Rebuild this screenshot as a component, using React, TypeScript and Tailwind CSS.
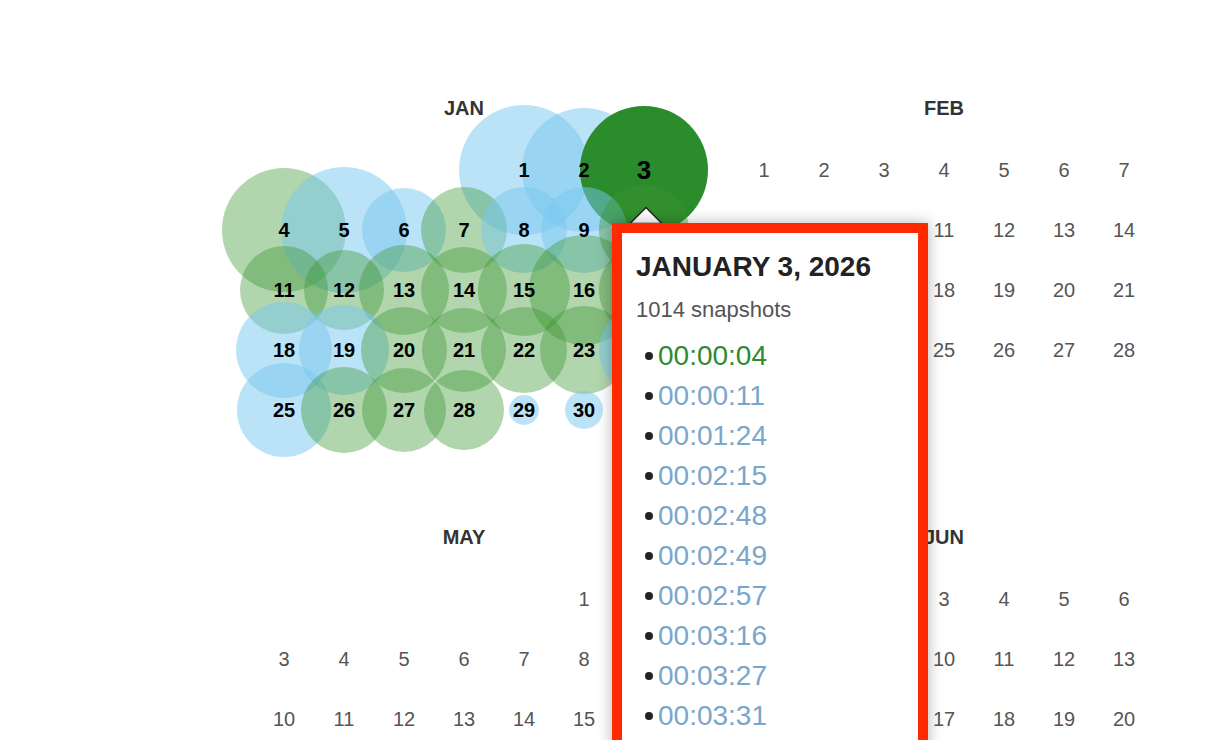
import React from "react";

type Kind = "blue" | "green" | "sel";

// January snapshot bubbles: radius in px, colour kind
const janDays: Record<number, [number, Kind]> = {
  1: [65, "blue"],
  2: [62, "blue"],
  3: [64, "sel"],
  4: [62, "green"],
  5: [63, "blue"],
  6: [42, "blue"],
  7: [43, "green"],
  8: [43, "blue"],
  9: [43, "blue"],
  10: [45, "green"],
  11: [44, "green"],
  12: [40, "green"],
  13: [45, "green"],
  14: [43, "green"],
  15: [46, "green"],
  16: [55, "green"],
  17: [45, "green"],
  18: [48, "blue"],
  19: [45, "blue"],
  20: [43, "green"],
  21: [42, "green"],
  22: [43, "green"],
  23: [44, "green"],
  24: [45, "blue"],
  25: [47, "blue"],
  26: [43, "green"],
  27: [42, "green"],
  28: [40, "green"],
  29: [15, "blue"],
  30: [19, "blue"],
  31: [14, "blue"],
};

const bubbleClass: Record<Kind, string> = {
  blue: "bg-[rgba(120,200,240,0.5)]",
  green: "bg-[rgba(60,150,50,0.4)]",
  sel: "bg-[#2b8c2b]",
};

const monthNames = ["JAN", "FEB", "MAR", "APR", "MAY", "JUN"];
const shown = [0, 1, 4, 5];

const times = [
  "00:00:04",
  "00:00:11",
  "00:01:24",
  "00:02:15",
  "00:02:48",
  "00:02:49",
  "00:02:57",
  "00:03:16",
  "00:03:27",
  "00:03:31",
];

function weeksOf(month: number) {
  const first = new Date(2026, month, 1).getDay();
  const count = new Date(2026, month + 1, 0).getDate();
  const cells: (number | null)[] = [];
  for (let i = 0; i < first; i++) cells.push(null);
  for (let d = 1; d <= count; d++) cells.push(d);
  while (cells.length % 7) cells.push(null);
  const weeks: (number | null)[][] = [];
  for (let i = 0; i < cells.length; i += 7) weeks.push(cells.slice(i, i + 7));
  return weeks;
}

function Month({ index }: { index: number }) {
  const weeks = weeksOf(index);
  const data = index === 0 ? janDays : {};
  return (
    <div className="w-[420px]">
      <div className="h-[20px] leading-[20px] text-center text-[20px] font-bold text-[#333] mb-[22px]">
        {monthNames[index]}
      </div>
      {weeks.map((week, wi) => (
        <div key={wi} className="grid grid-cols-7">
          {week.map((day, di) => {
            const info = day ? data[day] : undefined;
            return (
              <div key={di} className="relative h-[60px] flex items-center justify-center">
                {info && (
                  <div
                    className={`absolute rounded-full ${bubbleClass[info[1]]}`}
                    style={{
                      width: info[0] * 2,
                      height: info[0] * 2,
                      left: 30 - info[0],
                      top: 30 - info[0],
                    }}
                  />
                )}
                {day && (
                  <span
                    className={
                      info
                        ? info[1] === "sel"
                          ? "relative z-10 text-[26px] font-bold text-black"
                          : "relative z-10 text-[20px] font-bold text-black"
                        : "relative z-10 text-[20px] text-[#555]"
                    }
                  >
                    {day}
                  </span>
                )}
              </div>
            );
          })}
        </div>
      ))}
    </div>
  );
}

export default function App() {
  return (
    <div className="relative w-[1220px] h-[740px] overflow-hidden bg-white font-['Liberation_Sans',Arial,sans-serif]">
      <div className="pt-[98px] pl-[254px] grid grid-cols-[repeat(2,420px)] gap-x-[60px] gap-y-[87px] items-start">
        {shown.map((i) => (
          <Month key={i} index={i} />
        ))}
      </div>

      {/* pointer of the day popup */}
      <svg className="absolute left-[629px] top-[206px] z-20" width="34" height="18" viewBox="0 0 34 18">
        <polygon points="1,17.5 17,1.5 33,17.5" fill="#fff" stroke="#222" strokeWidth="1.5" />
      </svg>

      {/* day popup */}
      <div className="absolute left-[612px] top-[223px] z-20 w-[316px] h-[530px] bg-white border-[10px] border-[#ff2a00] shadow-[0_0_14px_rgba(0,0,0,0.3)] pl-[14px] pt-[19px] overflow-hidden">
        <div className="text-[28px] leading-[30px] font-bold text-[#222]">JANUARY 3, 2026</div>
        <div className="mt-[15px] text-[22px] leading-[26px] text-[#555]">1014 snapshots</div>
        <ul className="mt-[13px]">
          {times.map((t, i) => (
            <li key={t} className="h-[40px] flex items-center">
              <span className="shrink-0 ml-[9px] mr-[5px] w-[8px] h-[8px] rounded-full bg-[#222]" />
              <span className={i === 0 ? "text-[28px] text-[#2e8b2e]" : "text-[28px] text-[#7aa6ca]"}>{t}</span>
            </li>
          ))}
        </ul>
      </div>
    </div>
  );
}
